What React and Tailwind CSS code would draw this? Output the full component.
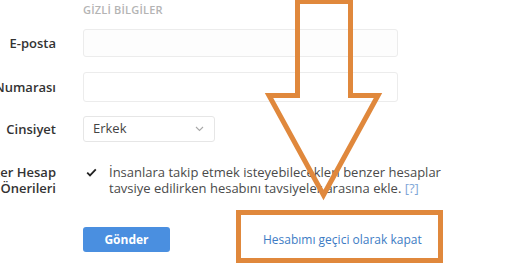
import React from "react";

const Label = ({ children }) => (
  <div className="w-[56px] shrink-0 flex justify-end">
    <div className="shrink-0 whitespace-nowrap text-right text-[13px] font-semibold leading-[16px] text-[#333]">
      {children}
    </div>
  </div>
);

const App = () => {
  return (
    <div
      className="relative w-[519px] h-[278px] overflow-hidden bg-white"
      style={{ fontFamily: '"Open Sans", "Liberation Sans", sans-serif' }}
    >
      <div className="flex flex-col pt-[3px]">
        {/* section title */}
        <div className="flex">
          <div className="w-[56px] shrink-0" />
          <div className="ml-[27px] text-[11px] font-semibold leading-[14px] tracking-[0.2px] text-[#b4b4b4]">
            GİZLİ BİLGİLER
          </div>
        </div>

        {/* e-posta */}
        <div className="flex items-center mt-[12px]">
          <Label>E-posta</Label>
          <div className="ml-[27px] w-[315px] h-[28px] rounded-[3px] border border-[#ececec] bg-[#fdfdfd]" />
        </div>

        {/* telefon */}
        <div className="flex items-center mt-[15px]">
          <Label>Telefon Numarası</Label>
          <div className="ml-[27px] w-[315px] h-[30px] rounded-[3px] border border-[#ececec] bg-white" />
        </div>

        {/* cinsiyet */}
        <div className="flex items-center mt-[14px]">
          <Label>Cinsiyet</Label>
          <div className="ml-[27px] w-[132px] h-[26px] rounded-[3px] border border-[#e6e6e6] flex items-center justify-between pl-[9px] pr-[10px]">
            <span className="text-[13px] text-[#444]">Erkek</span>
            <svg width="9" height="6" viewBox="0 0 9 6" fill="none">
              <path d="M1 1l3.5 3.5L8 1" stroke="#a8a8a8" strokeWidth="1.1" />
            </svg>
          </div>
        </div>

        {/* benzer hesap önerileri */}
        <div className="flex items-start mt-[22px]">
          <Label>
            Benzer Hesap
            <br />
            Önerileri
          </Label>
          <div className="ml-[30px] flex items-start">
            <svg width="11" height="9" viewBox="0 0 11 9" className="mt-[4px] shrink-0" fill="none">
              <path d="M1.2 4.6l2.8 2.8L9.8 1.3" stroke="#222" strokeWidth="1.8" />
            </svg>
            <p className="ml-[12px] text-[13px] leading-[16px] text-[#4a4a4a]">
              İnsanlara takip etmek isteyebilecekleri benzer hesaplar
              <br />
              tavsiye edilirken hesabını tavsiyeler arasına ekle.{" "}
              <span className="text-[#7ea6d8]">[?]</span>
            </p>
          </div>
        </div>

        {/* actions */}
        <div className="flex items-center mt-[31px]">
          <div className="w-[56px] shrink-0" />
          <button className="ml-[27px] w-[87px] h-[25px] rounded-[3px] bg-[#4a8fe0] text-[12px] font-bold text-white">
            Gönder
          </button>
          <a className="ml-[93px] text-[12px] text-[#3d7cc4]">Hesabımı geçici olarak kapat</a>
        </div>
      </div>

      {/* orange annotation overlay */}
      <svg
        className="absolute left-0 top-0 pointer-events-none"
        width="519"
        height="278"
        viewBox="0 0 519 278"
        fill="none"
      >
        <path
          d="M297.5 1.5 L350.5 1.5 L350.5 95.5 L378 95.5 L323.5 195 L269 95.5 L297.5 95.5 Z"
          stroke="#e0883c"
          strokeWidth="5"
          strokeLinejoin="miter"
        />
        <rect x="238.5" y="212.5" width="202" height="48" stroke="#e0883c" strokeWidth="5" />
      </svg>
    </div>
  );
};

export default App;
